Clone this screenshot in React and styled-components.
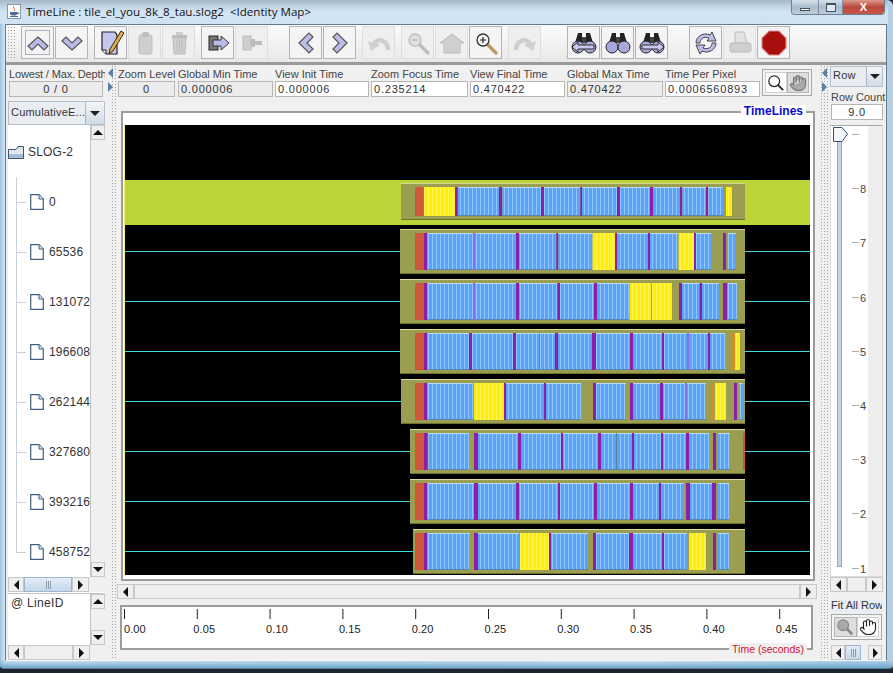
import React from 'react';
import styled, {createGlobalStyle} from 'styled-components';
import {Hand} from 'lucide-react';

const GlobalStyle = createGlobalStyle`
    html, body {
        margin: 0;
        padding: 0;
        background: #1c2530;
    }
    * {
        box-sizing: border-box;
    }
`

const Screen = styled.div`
    width: 893px;
    height: 673px;
    overflow: hidden;
    display: flex;
    flex-direction: column;
    font-family: "Liberation Sans", Arial, sans-serif;
    font-size: 11px;
    color: #333;
`
const Window = styled.div`
    height: 669px;
    display: flex;
    flex-direction: column;
    padding: 0 6px 7px 5px;
    background:
        linear-gradient(180deg, transparent 660px, #6ca8d0 668px),
        linear-gradient(90deg, #9fc3de 0, #d4e6f4 5px, #c8def0 40%, #d8e8f4 70%, #b4d0e6 100%);
    border-radius: 0 6px 4px 4px;
    border-bottom: 1px solid #5f7f96;
`
const TitleBar = styled.div`
    height: 24px;
    flex: none;
    display: flex;
    align-items: flex-start;
    margin: 0 -1px 0 -5px;
    padding-left: 7px;
    background: linear-gradient(180deg, #a4b6c8 0, #bfd2e2 6px, #d3e5f4 12px, #cfe2f2 24px);
`
const Title = styled.div`
    margin: 4px 0 0 5px;
    font-family: "Open Sans", sans-serif;
    font-size: 11.6px;
    line-height: 16px;
    color: #111;
    white-space: pre;
`
const WindowControls = styled.div`
    margin-left: auto;
    margin-right: 3px;
    display: flex;
    height: 15px;
    border: 1px solid #6b7f90;
    border-top: none;
    border-radius: 0 0 4px 4px;
    overflow: hidden;
`
const WindowButton = styled.div`
    width: ${props => props.$width}px;
    display: flex;
    align-items: center;
    justify-content: center;
    color: ${props => props.$close ? '#fff' : '#44525e'};
    font-weight: bold;
    background: ${props => props.$close
        ? 'linear-gradient(180deg, #dd9a90, #b9483c 50%, #c9584a)'
        : 'linear-gradient(180deg, #d6e2ec, #a9bccb 50%, #bccddb)'};
    border-left: ${props => props.$first ? 'none' : '1px solid #7d8f9e'};
`
const MinGlyph = styled.span`
    width: 10px;
    height: 3px;
    margin-top: 5px;
    border: 1px solid #44525e;
    background: #fff;
`
const MaxGlyph = styled.span`
    width: 10px;
    height: 9px;
    border: 1px solid #44525e;
    border-top-width: 2px;
    background: #dfe8ef;
`
const Frame = styled.div`
    flex: 1;
    min-height: 0;
    display: flex;
    flex-direction: column;
    background: #f0f0f0;
    border: 1px solid #64798a;
    border-bottom-color: #f4f8fb;
`
const Toolbar = styled.div`
    height: 40px;
    flex: none;
    display: flex;
    align-items: flex-start;
    padding: 1px 0 0 1px;
    background: linear-gradient(180deg, #fbfbfb, #e8e8e8);
    border-bottom: 3px solid #9a9a9a;
`
const Grip = styled.div`
    width: 10px;
    height: 34px;
    background-image: radial-gradient(#a6a6a6 0.7px, transparent 0.9px);
    background-size: 3px 3px;
`
const ToolButton = styled.div`
    width: 33px;
    height: 33px;
    flex: none;
    margin-left: ${props => props.$gap ?? 1}px;
    display: flex;
    align-items: center;
    justify-content: center;
    background: ${props => props.$off ? '#efefef' : '#f4f4f4'};
    border: 1px solid ${props => props.$off ? '#dedede' : '#b4b4b4'};
    box-shadow: ${props => props.$focus ? 'inset 0 0 0 3px #f4f4f4, inset 0 0 0 4px #b0b0c0' : 'none'};
`
const Main = styled.div`
    flex: 1;
    min-height: 0;
    display: flex;
    padding-left: 1px;
`
const LeftPane = styled.div`
    width: 98px;
    flex: none;
    display: flex;
    flex-direction: column;
`
const Splitter = styled.div`
    width: ${props => props.$width}px;
    flex: none;
    display: flex;
    flex-direction: column;
    gap: 4px;
    padding-top: 3px;
    padding-left: ${props => props.$inset}px;
    background-image:
        linear-gradient(90deg, #f0f0f0 ${props => props.$dotsFrom}px, transparent ${props => props.$dotsFrom}px),
        radial-gradient(#a6a6a6 0.7px, transparent 0.9px);
    background-size: 100% 100%, 3px 3px;
`
const SplitArrow = styled.span`
    width: 0;
    height: 0;
    border-top: 5px solid transparent;
    border-bottom: 5px solid transparent;
    ${props => props.$dir === 'left'
        ? 'border-right: 5px solid #5a7fa8;'
        : 'border-left: 5px solid #5a7fa8;'}
`
const CenterPane = styled.div`
    width: 704px;
    flex: none;
    display: flex;
    flex-direction: column;
`
const RightPane = styled.div`
    width: 56px;
    flex: none;
    display: flex;
    flex-direction: column;
`
const InfoRow = styled.div`
    display: flex;
    align-items: flex-start;
    padding: 2px 0 0 2px;
    height: 32px;
    flex: none;
`
const Info = styled.div`
    width: ${props => props.$width}px;
    flex: none;
    margin-left: ${props => props.$left || 0}px;
`
const Label = styled.div`
    height: 14px;
    line-height: 14px;
    margin: ${props => props.$margin || 0};
    font-size: 11px;
    letter-spacing: ${props => props.$spacing || 0}px;
    color: #444;
    white-space: nowrap;
`
const Field = styled.div`
    height: 16px;
    line-height: 14px;
    padding: 0 2px;
    font-size: 11px;
    letter-spacing: 0.8px;
    color: #333;
    text-align: ${props => props.$center ? 'center' : 'left'};
    background: ${props => props.$white ? '#fff' : '#ececec'};
    border: 1px solid #b6b6b6;
`
const ToggleGroup = styled.div`
    margin: ${props => props.$margin};
    width: ${props => props.$width}px;
    height: ${props => props.$height}px;
    flex: none;
    display: flex;
    padding: 2px;
    background: #f4f4f4;
    border: 1px solid #a8a8a8;
`
const ToggleItem = styled.div`
    flex: 1;
    display: flex;
    align-items: center;
    justify-content: center;
    background: ${props => props.$on ? '#fdfdfd' : '#dddddd'};
    border: 1px solid ${props => props.$on ? '#cfcfcf' : '#b5b5b5'};
`
const Combo = styled.div`
    margin: ${props => props.$margin};
    height: ${props => props.$height}px;
    flex: none;
    display: flex;
    border: 1px solid #b4c0cc;
    background: #e9edf1;
`
const ComboText = styled.div`
    flex: 1;
    min-width: 0;
    padding-left: 2px;
    line-height: ${props => props.$height - 4}px;
    letter-spacing: 0.2px;
    white-space: nowrap;
`
const ComboButton = styled.div`
    width: ${props => props.$width}px;
    flex: none;
    display: flex;
    align-items: center;
    justify-content: center;
    background: linear-gradient(180deg, #f4f6f8, #cfdbe6);
    border-left: 1px solid #a9b7c4;
`
const DownCaret = styled.span`
    width: 0;
    height: 0;
    border-left: 5px solid transparent;
    border-right: 5px solid transparent;
    border-top: 5px solid #222;
`
const TreeRow = styled.div`
    height: 452px;
    flex: none;
    display: flex;
    padding-left: 1px;
`
const Tree = styled.div`
    width: 82px;
    flex: none;
    overflow: hidden;
    background: #fff;
    padding-top: 2px;
`
const RootItem = styled.div`
    height: 50px;
    display: flex;
    align-items: center;
    gap: 4px;
    font-size: 12px;
    letter-spacing: 0.2px;
`
const TreeItem = styled.div`
    height: 50px;
    display: flex;
    align-items: center;
    gap: 5px;
    padding-left: 22px;
    font-size: 12px;
    letter-spacing: 0.2px;
    white-space: nowrap;
    background:
        linear-gradient(#c8d0da, #c8d0da) 8px 0 / 1px ${props => props.$last ? '50%' : '100%'} no-repeat,
        linear-gradient(#c8d0da, #c8d0da) 8px 50% / 10px 1px no-repeat;
`
const VScroll = styled.div`
    width: 15px;
    flex: none;
    display: flex;
    flex-direction: column;
    background: #f0f0f0;
    border-left: 1px solid #c4c4c4;
`
const HScrollBar = styled.div`
    height: 15px;
    flex: none;
    display: flex;
    margin: ${props => props.$margin || 0};
    background: #f0f0f0;
`
const ArrowBox = styled.div`
    width: ${props => props.$size}px;
    height: ${props => props.$tall ? '15px' : '100%'};
    flex: none;
    display: flex;
    align-items: center;
    justify-content: center;
    background: #efefef;
    border: 1px solid #c8c8c8;
`
const Caret = styled.span`
    width: 0;
    height: 0;
    ${props => props.$dir === 'left' && 'border-top: 5px solid transparent; border-bottom: 5px solid transparent; border-right: 5px solid #111;'}
    ${props => props.$dir === 'right' && 'border-top: 5px solid transparent; border-bottom: 5px solid transparent; border-left: 5px solid #111;'}
    ${props => props.$dir === 'up' && 'border-left: 5px solid transparent; border-right: 5px solid transparent; border-bottom: 5px solid #111;'}
    ${props => props.$dir === 'down' && 'border-left: 5px solid transparent; border-right: 5px solid transparent; border-top: 5px solid #111;'}
`
const Track = styled.div`
    flex: 1;
    min-width: 0;
    min-height: 0;
    display: flex;
`
const Thumb = styled.div`
    flex: ${props => props.$width ? `0 0 ${props.$width}px` : 1};
    display: flex;
    align-items: center;
    justify-content: center;
    gap: 1px;
    background: ${props => props.$blue
        ? 'linear-gradient(180deg, #e2ecf6, #c6d8ea)'
        : '#efefef'};
    border: 1px solid ${props => props.$blue ? '#9eb6d0' : '#c8c8c8'};
`
const GripLine = styled.span`
    width: 1px;
    height: 8px;
    background: #8a9cb0;
`
const Corner = styled.div`
    width: ${props => props.$width}px;
    flex: none;
`
const Divider = styled.div`
    height: 2px;
    flex: none;
    background: #fff;
    border-bottom: 1px solid #c4c4c4;
`
const ListRow = styled.div`
    height: 51px;
    flex: none;
    display: flex;
    padding-left: 1px;
`
const List = styled.div`
    width: 82px;
    flex: none;
    background: #fff;
    padding: 2px 0 0 3px;
    font-size: 12px;
    letter-spacing: 0.3px;
    white-space: pre;
`
const Titled = styled.div`
    position: relative;
    flex: none;
    margin: ${props => props.$margin};
    height: ${props => props.$height}px;
    padding: ${props => props.$padding};
    background: #fff;
    border: 2px solid #9c9c9c;
`
const Legend = styled.div`
    position: absolute;
    right: ${props => props.$right}px;
    ${props => props.$bottom ? 'bottom: -8px;' : 'top: -8px;'}
    padding: 0 3px;
    line-height: 13px;
    background: ${props => props.$bottom ? '#f0f0f0' : '#fff'};
    color: ${props => props.$color};
    font-weight: ${props => props.$bold ? 'bold' : 'normal'};
    font-size: ${props => props.$bold ? 12 : 10.5}px;
`
const Chart = styled.svg`
    display: block;
    flex: none;
`
const RowCountField = styled(Field)`
    margin: 0 2px;
`
const SliderPanel = styled.div`
    height: 452px;
    flex: none;
    margin: 5px 2px 0 1px;
    display: flex;
    background: #eeeeee;
    border: 1px solid #d8d8d8;
    border-top-color: #a8a8a8;
`
const SliderChart = styled(Chart)`
    background: #fff;
`
const FitButton = styled.div`
    height: 14px;
    line-height: 13px;
    flex: none;
    margin: 7px 3px 0 2px;
    background: #e8eef4;
    white-space: nowrap;
    overflow: hidden;
`

// x values are thirds of a pixel from x=395, read off the zoomed picture
const ROWS = [
    {box: 18, s: 'r60 86 y87 180 p180 188 b189 312 p312 321 b322 438 p438 447 b447 556 p556 561 b561 666 p666 675 b675 765 p765 774 b775 855 p855 861 b862 933 p933 939 b940 984 o990 993 y993 1011'},
    {box: 15, s: 'r60 85 p86 96 b98 234 l234 241 b241 363 p363 372 b372 484 p484 490 b490 592 y593 660 p660 666 b666 759 p759 765 b765 849 y851 897 p897 903 b903 948 p984 993 b999 1023'},
    {box: 15, s: 'r60 85 p86 96 b98 234 l234 240 b241 363 p363 372 b372 487 p487 495 b495 597 p597 606 b606 702 y704 768 o768 771 y771 831 p852 861 b861 914 p914 921 b921 972 p984 996 b999 1026'},
    {box: 15, s: 'r60 85 p86 96 b98 222 p222 231 b231 354 p354 363 b363 432 d432 434 b434 480 p480 489 b489 591 p591 603 b603 705 p705 714 b714 801 p801 807 b807 876 l876 882 b882 939 p939 945 b945 990 o1012 1020 y1020 1035'},
    {box: 18, s: 'r60 85 p86 96 b98 234 y237 327 p327 333 b333 447 p447 453 b453 558 p594 603 b603 693 p705 714 b714 795 p795 804 b804 870 l870 876 b876 933 o951 957 y960 993 p1017 1026 b1032 1044'},
    {box: 45, s: 'r60 85 p86 98 b100 222 p237 249 b249 369 p369 378 b378 498 p498 504 b504 609 p609 618 b618 664 d664 666 b666 711 p711 717 b717 798 p798 804 b804 873 p873 882 b882 942 p954 963 b969 1005 r1044 1050'},
    {box: 45, s: 'r60 85 p86 96 b98 237 p237 249 b249 363 p363 372 b372 489 p489 495 b495 597 p597 606 b606 705 p705 714 b714 792 p792 798 b798 867 p873 885 b885 951 p951 963 b969 1002'},
    {box: 54, s: 'r60 85 p86 96 b98 225 p237 249 b249 372 y375 462 p462 468 b468 579 p594 603 b603 702 p702 714 b714 801 p801 807 b807 876 y882 933 p954 963 b969 1002'},
]
const LABELS = ['0', '65536', '131072', '196608', '262144', '327680', '393216', '458752']
const FILL = {r: '#d0583a', y: 'url(#yellowStripes)', p: '#8a1fa8', b: 'url(#stripes)', l: '#8a6cf0', o: '#e08a1c', d: '#3c6c9c'}
const px = z => 395 + z / 3

// the string alternates "k<from> <to>", so read it in pairs
const segmentsOf = s => {
    const parts = s.split(' ')
    const out = []
    for (let i = 0; i < parts.length; i += 2) {
        out.push({kind: parts[i][0], from: Number(parts[i].slice(1)), to: Number(parts[i + 1])})
    }
    return out
}

const Timeline = () => (
    <Chart width="686" height="450" viewBox="124 125 686 450">
        <defs>
            <pattern id="stripes" patternUnits="userSpaceOnUse" width="4" height="10">
                <rect width="4" height="10" fill="#5aa2fa"/>
                <rect width="1" height="10" fill="#90c8fc"/>
            </pattern>
            <pattern id="yellowStripes" patternUnits="userSpaceOnUse" width="4" height="10">
                <rect width="4" height="10" fill="#fff000"/>
                <rect width="1" height="10" fill="#fff45c"/>
            </pattern>
        </defs>
        <rect x="124" y="125" width="686" height="450" fill="#000"/>
        <rect x="124" y="180" width="686" height="45" fill="#bcd437"/>
        {ROWS.map((row, i) => {
            const top = i === 0 ? 183 : 179 + 50 * i
            const height = i === 0 ? 37 : 45
            const innerTop = i === 0 ? 187 : 183 + 50 * i
            const innerH = i === 0 ? 29 : 37
            const left = px(row.box)
            const line = 201 + 50 * i
            return (
                <g key={i}>
                    {i > 0 && <rect x="124" y={line} width={left - 124} height="1" fill="#40d8d8"/>}
                    {i > 0 && <rect x="745" y={line} width="65" height="1" fill="#40d8d8"/>}
                    <rect x={left} y={top} width={745 - left} height={height} fill="#9b9d50"/>
                    <rect x={left} y={top} width={745 - left} height="1" fill="#dcdca0"/>
                    <rect x={left} y={top + height - 1} width={745 - left} height="1" fill="#6d6e30"/>
                    {segmentsOf(row.s).map((seg, k) => (
                        <g key={k}>
                            <rect x={px(seg.from)} y={innerTop} width={(seg.to - seg.from) / 3} height={innerH} fill={FILL[seg.kind]}/>
                            {seg.kind === 'b' && <rect x={px(seg.from)} y={innerTop} width={(seg.to - seg.from) / 3} height="1" fill="#b4dcf4"/>}
                            {seg.kind === 'b' && <rect x={px(seg.from)} y={innerTop + innerH - 1} width={(seg.to - seg.from) / 3} height="1" fill="#5a88b0"/>}
                        </g>
                    ))}
                </g>
            )
        })}
        <rect x="124" y="125" width="1" height="450" fill="#f4f47c"/>
    </Chart>
)

const TICKS = ['0.00', '0.05', '0.10', '0.15', '0.20', '0.25', '0.30', '0.35', '0.40', '0.45']

const Axis = () => (
    <Chart width="691" height="41" viewBox="122 607 691 41">
        {TICKS.map((t, i) => {
            const x = 124.5 + 72.8 * i
            return (
                <g key={t}>
                    <line x1={x} x2={x} y1="609" y2="619" stroke="#222"/>
                    <text x={i === 0 ? 124 : x - 4} y="633" fontSize="11" letterSpacing="0.1" fill="#222" fontFamily="Liberation Sans">{t}</text>
                </g>
            )
        })}
    </Chart>
)

const Slider = () => (
    <SliderChart width="37" height="450" viewBox="831 126 37 450">
        <rect x="837.5" y="128.5" width="4" height="438" fill="#c8d4ea" stroke="#98a8c0"/>
        {[9, 8, 7, 6, 5, 4, 3, 2, 1].map((n, i) => {
            const y = Math.round(134 + 54.2 * i) + 0.5
            return (
                <g key={n}>
                    <line x1="852" x2="859" y1={y} y2={y} stroke="#aaa"/>
                    {n < 9 && <text x="860" y={y + 4} fontSize="11" fill="#444" fontFamily="Liberation Sans">{n}</text>}
                </g>
            )
        })}
        <path d="M833.5 127.5 H842 L847.5 134 L842 141.5 H833.5 Z" fill="#f4f6fa" stroke="#33506e"/>
    </SliderChart>
)

const Icon = ({children}) => <svg width="28" height="28" viewBox="0 0 28 28">{children}</svg>

const GRAY = '#cfcfcf'
const GRAY_EDGE = '#bdbdbd'
const LAV = '#bcbcea'

const Chevron = ({d}) => (
    <Icon>
        <path d={d} fill={LAV} stroke="#555" strokeWidth="1.2" strokeLinejoin="miter"/>
    </Icon>
)
const EditIcon = () => (
    <Icon>
        <path d="M5 3 H18 L20 6 V25 H9 L5 21 Z" fill="#c6c6ee" stroke="#222" strokeWidth="1.2"/>
        <path d="M5 21 H9 V25" fill="#fff" stroke="#222"/>
        <path d="M24 2 L27 4 L16 22 L12 25 L13 20 Z" fill="#d8b050" stroke="#3a2a10"/>
    </Icon>
)
const ClipboardIcon = () => (
    <Icon>
        <rect x="8" y="6" width="13" height="19" rx="2" fill={GRAY} stroke={GRAY_EDGE}/>
        <rect x="11" y="3" width="7" height="5" rx="2" fill={GRAY_EDGE}/>
    </Icon>
)
const TrashIcon = () => (
    <Icon>
        <rect x="7" y="6" width="15" height="3" fill={GRAY_EDGE}/>
        <rect x="11" y="3" width="7" height="3" fill={GRAY}/>
        <path d="M8 9 H21 L20 25 H9 Z" fill={GRAY} stroke={GRAY_EDGE}/>
        <path d="M12 11 V23 M14.5 11 V23 M17 11 V23" stroke={GRAY_EDGE}/>
    </Icon>
)
const ExportIcon = () => (
    <Icon>
        <rect x="5" y="7" width="9" height="14" fill="#777" stroke="#222"/>
        <path d="M9 11 H17 V7 L25 14 L17 21 V17 H9 Z" fill={LAV} stroke="#333"/>
    </Icon>
)
const ImportIcon = () => (
    <Icon>
        <rect x="5" y="7" width="8" height="14" fill={GRAY} stroke={GRAY_EDGE}/>
        <path d="M13 10 H17 V12 H24 V16 H17 V18 H13 Z" fill={GRAY_EDGE}/>
    </Icon>
)
const UndoIcon = ({flip}) => (
    <Icon>
        <g transform={flip ? 'translate(28 0) scale(-1 1)' : undefined}>
            <path d="M23 21 C23 11 12 8 9 15" fill="none" stroke={GRAY} strokeWidth="4.5"/>
            <path d="M3 12 L15 16 L6 22 Z" fill={GRAY}/>
        </g>
    </Icon>
)
const LensIcon = ({mark, off}) => (
    <Icon>
        <path d="M15 15 L24 24" stroke={off ? GRAY_EDGE : '#b89a58'} strokeWidth="3.2" strokeLinecap="round"/>
        <circle cx="11" cy="11" r="6" fill={off ? '#e0e0e0' : '#f2f2fa'} stroke={off ? GRAY_EDGE : '#333'} strokeWidth="1.3"/>
        {mark === 'minus' && <path d="M8 11 H14" stroke={GRAY_EDGE} strokeWidth="1.5"/>}
        {mark === 'plus' && <path d="M8 11 H14 M11 8 V14" stroke="#222" strokeWidth="1.2"/>}
    </Icon>
)
const HomeIcon = () => (
    <Icon>
        <path d="M2 14 L14 5 L26 14 H22 V24 H6 V14 Z" fill={GRAY} stroke={GRAY_EDGE}/>
    </Icon>
)
const BinocularsIcon = ({arrow}) => (
    <Icon>
        <path d="M5 14 L8 4 H12 V14 Z M16 14 V4 H20 L23 14 Z" fill="#222"/>
        <rect x="12" y="8" width="4" height="6" fill="#444"/>
        <circle cx="8" cy="18" r="6" fill="#a8a8dc" stroke="#222"/>
        <circle cx="20" cy="18" r="6" fill="#a8a8dc" stroke="#222"/>
        {arrow === 'left' && <path d="M2 18 L8 13 V16 H24 V20 H8 V23 Z" fill="#c8c8f0" stroke="#333"/>}
        {arrow === 'right' && <path d="M26 18 L20 13 V16 H4 V20 H20 V23 Z" fill="#c8c8f0" stroke="#333"/>}
    </Icon>
)
const RefreshIcon = () => (
    <Icon>
        <path d="M4 14 C4 7 12 3 18 6 L20 3 L24 12 L15 12 L17 9 C12 7 8 10 8 14 Z" fill={LAV} stroke="#444"/>
        <path d="M24 14 C24 21 16 25 10 22 L8 25 L4 16 L13 16 L11 19 C16 21 20 18 20 14 Z" fill={LAV} stroke="#444"/>
    </Icon>
)
const PrintIcon = () => (
    <Icon>
        <path d="M9 3 H18 L21 14 H9 Z" fill="#e2e2e2" stroke={GRAY_EDGE}/>
        <rect x="4" y="14" width="21" height="9" rx="2" fill={GRAY} stroke={GRAY_EDGE}/>
    </Icon>
)
const StopIcon = () => (
    <Icon>
        <path d="M9 2 H19 L26 9 V19 L19 26 H9 L2 19 V9 Z" fill="#a80e0e" stroke="#d88" strokeWidth="1.2"/>
    </Icon>
)
const Glass = ({gray, size = 20}) => (
    <svg width={size} height={size} viewBox="0 0 20 20">
        <path d="M12 12 L18 18" stroke={gray ? '#888' : '#222'} strokeWidth={gray ? 3 : 2}/>
        <circle cx="8" cy="8" r="6" fill={gray ? '#aaa' : '#fff'} stroke={gray ? '#888' : '#222'} strokeWidth="1.3"/>
    </svg>
)
const JavaSvg = styled.svg`
    margin-top: 4px;
    flex: none;
`
const JavaIcon = () => (
    <JavaSvg width="14" height="15" viewBox="0 0 14 15">
        <rect x="0.5" y="0.5" width="13" height="14" fill="#fdfdfd" stroke="#8a9aa8"/>
        <path d="M7 2 C5 4 9 5 7 7" stroke="#d0501c" fill="none"/>
        <path d="M3 8 H10 V10 C10 12 4 12 3 10 Z M10 8.5 H12 V10 H10" fill="#4a6a9a"/>
        <path d="M3 12.5 H11" stroke="#4a6a9a"/>
    </JavaSvg>
)
const FolderIcon = () => (
    <Chart width="16" height="13" viewBox="0 0 16 13">
        <path d="M0.5 3.5 H8 L10 0.5 H15.5 V12.5 H0.5 Z" fill="#dfe6f0" stroke="#3c5470"/>
        <path d="M1 8 H15 V12 H1 Z" fill="#a8bcd4"/>
    </Chart>
)
const DocIcon = () => (
    <Chart width="14" height="16" viewBox="0 0 14 16">
        <path d="M0.7 0.7 H9 L13.3 5 V15.3 H0.7 Z" fill="#fff" stroke="#3f5f82" strokeWidth="1.2"/>
        <path d="M9 0.7 V5 H13.3" fill="#dfe6f0" stroke="#3f5f82"/>
    </Chart>
)

const Grips = () => <><GripLine/><GripLine/><GripLine/></>

const HScroll = ({margin, thumb, blue, lead = 17, trail = 17}) => (
    <HScrollBar $margin={margin}>
        <ArrowBox $size={lead}><Caret $dir="left"/></ArrowBox>
        <Track>
            <Thumb $blue={blue} $width={thumb}>{blue && <Grips/>}</Thumb>
        </Track>
        <ArrowBox $size={trail}><Caret $dir="right"/></ArrowBox>
    </HScrollBar>
)

const ScrollColumn = () => (
    <VScroll>
        <ArrowBox $size={14} $tall><Caret $dir="up"/></ArrowBox>
        <Track/>
        <ArrowBox $size={14} $tall><Caret $dir="down"/></ArrowBox>
    </VScroll>
)

const TOOLS = [
    {gap: 4, focus: true, icon: <Chevron d="M14 8 L24 17 L20 21 L14 15 L8 21 L4 17 Z"/>},
    {icon: <Chevron d="M14 21 L24 12 L20 8 L14 14 L8 8 L4 12 Z"/>},
    {gap: 6, icon: <EditIcon/>},
    {off: true, icon: <ClipboardIcon/>},
    {off: true, icon: <TrashIcon/>},
    {gap: 6, icon: <ExportIcon/>},
    {off: true, icon: <ImportIcon/>},
    {gap: 21, icon: <Chevron d="M7 14 L17 4 L21 8 L15 14 L21 20 L17 24 Z"/>},
    {icon: <Chevron d="M21 14 L11 4 L7 8 L13 14 L7 20 L11 24 Z"/>},
    {gap: 6, off: true, icon: <UndoIcon/>},
    {gap: 6, off: true, icon: <LensIcon off mark="minus"/>},
    {off: true, icon: <HomeIcon/>},
    {icon: <LensIcon mark="plus"/>},
    {gap: 6, off: true, icon: <UndoIcon flip/>},
    {gap: 26, icon: <BinocularsIcon arrow="left"/>},
    {icon: <BinocularsIcon/>},
    {icon: <BinocularsIcon arrow="right"/>},
    {gap: 21, icon: <RefreshIcon/>},
    {off: true, icon: <PrintIcon/>},
    {icon: <StopIcon/>},
]

const INFO = [
    {title: 'Zoom Level', value: '0', width: 57, center: true},
    {title: 'Global Min Time', value: '0.000006', width: 95, left: 3},
    {title: 'View  Init Time', value: '0.000006', width: 94, left: 2, white: true},
    {title: 'Zoom Focus Time', value: '0.235214', width: 97, left: 2, white: true},
    {title: 'View Final Time', value: '0.470422', width: 95, left: 2, white: true},
    {title: 'Global Max Time', value: '0.470422', width: 96, left: 2},
    {title: 'Time Per Pixel', value: '0.0006560893', width: 95, left: 2, white: true},
]

export default function App() {
    return (
        <Screen>
            <GlobalStyle/>
            <Window>
                <TitleBar>
                    <JavaIcon/>
                    <Title>TimeLine : tile_el_you_8k_8_tau.slog2  &lt;Identity Map&gt;</Title>
                    <WindowControls>
                        <WindowButton $width={26} $first><MinGlyph/></WindowButton>
                        <WindowButton $width={24}><MaxGlyph/></WindowButton>
                        <WindowButton $width={42} $close>X</WindowButton>
                    </WindowControls>
                </TitleBar>
                <Frame>
                    <Toolbar>
                        <Grip/>
                        {TOOLS.map((tool, i) => (
                            <ToolButton key={i} $gap={tool.gap} $off={tool.off} $focus={tool.focus}>{tool.icon}</ToolButton>
                        ))}
                    </Toolbar>
                    <Main>
                        <LeftPane>
                            <InfoRow>
                                <Info $width={94}>
                                    <Label $spacing={-0.15}>Lowest / Max. Depth</Label>
                                    <Field $center>0 / 0</Field>
                                </Info>
                            </InfoRow>
                            <Combo $margin="4px 0 0 1px" $height={24}>
                                <ComboText $height={24}>CumulativeE...</ComboText>
                                <ComboButton $width={19}><DownCaret/></ComboButton>
                            </Combo>
                            <TreeRow>
                                <Tree>
                                    <RootItem><FolderIcon/>SLOG-2</RootItem>
                                    {LABELS.map((label, i) => (
                                        <TreeItem key={label} $last={i === LABELS.length - 1}>
                                            <DocIcon/>{label}
                                        </TreeItem>
                                    ))}
                                </Tree>
                                <ScrollColumn/>
                            </TreeRow>
                            <HScrollBar $margin="0 0 0 1px">
                                <ArrowBox $size={16}><Caret $dir="left"/></ArrowBox>
                                <Thumb $blue $width={48}><Grips/></Thumb>
                                <ArrowBox $size={17}><Caret $dir="right"/></ArrowBox>
                                <Corner $width={16}/>
                            </HScrollBar>
                            <Divider/>
                            <ListRow>
                                <List>@ LineID</List>
                                <ScrollColumn/>
                            </ListRow>
                            <HScrollBar $margin="0 15px 0 1px">
                                <ArrowBox $size={16}><Caret $dir="left"/></ArrowBox>
                                <Thumb/>
                                <ArrowBox $size={17}><Caret $dir="right"/></ArrowBox>
                            </HScrollBar>
                        </LeftPane>
                        <Splitter $width={11} $inset={3} $dotsFrom={5}>
                            <SplitArrow $dir="left"/>
                            <SplitArrow $dir="right"/>
                        </Splitter>
                        <CenterPane>
                            <InfoRow>
                                {INFO.map(item => (
                                    <Info key={item.title} $width={item.width} $left={item.left}>
                                        <Label>{item.title}</Label>
                                        <Field $center={item.center} $white={item.white}>{item.value}</Field>
                                    </Info>
                                ))}
                                <ToggleGroup $margin="2px 0 0 2px" $width={50} $height={27}>
                                    <ToggleItem $on><Glass size={18}/></ToggleItem>
                                    <ToggleItem><Hand size={18} color="#777" fill="#aaa" strokeWidth={1.5}/></ToggleItem>
                                </ToggleGroup>
                            </InfoRow>
                            <Titled $margin="14px 5px 0 5px" $height={470} $padding="12px 3px 4px 1px">
                                <Legend $right={7} $color="#0b0bd0" $bold>TimeLines</Legend>
                                <Timeline/>
                            </Titled>
                            <HScroll margin="3px 3px 0 1px"/>
                            <Titled $margin="6px 7px 0 4px" $height={45} $padding="0">
                                <Legend $right={4} $color="#d01030" $bottom>Time (seconds)</Legend>
                                <Axis/>
                            </Titled>
                        </CenterPane>
                        <Splitter $width={9} $inset={2} $dotsFrom={0}>
                            <SplitArrow $dir="left"/>
                            <SplitArrow $dir="right"/>
                        </Splitter>
                        <RightPane>
                            <Combo $margin="1px 2px 0 1px" $height={21}>
                                <ComboText $height={21}>Row</ComboText>
                                <ComboButton $width={16}><DownCaret/></ComboButton>
                            </Combo>
                            <Label $margin="3px 0 0 2px">Row Count</Label>
                            <RowCountField $center $white>9.0</RowCountField>
                            <SliderPanel>
                                <Slider/>
                            </SliderPanel>
                            <HScroll margin="0 2px 0 1px"/>
                            <FitButton>Fit All Row</FitButton>
                            <ToggleGroup $margin="1px 3px 0 2px" $width={51} $height={26}>
                                <ToggleItem><Glass gray size={18}/></ToggleItem>
                                <ToggleItem $on><Hand size={18} color="#222" fill="#fff" strokeWidth={1.5}/></ToggleItem>
                            </ToggleGroup>
                            <HScroll margin="5px 3px 0 2px" blue thumb={16} lead={14} trail={14}/>
                        </RightPane>
                    </Main>
                </Frame>
            </Window>
        </Screen>
    )
}
